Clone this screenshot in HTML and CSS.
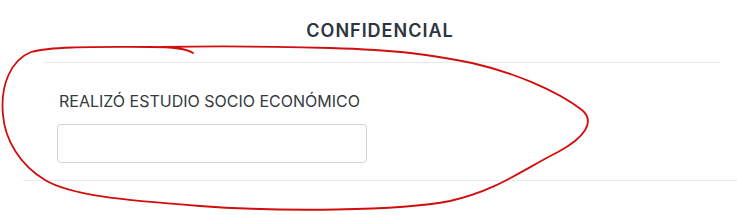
FILE: index.html
```html
<!DOCTYPE html>
<html lang="es">
<head>
    <meta charset="UTF-8">
    <meta name="viewport" content="width=device-width, initial-scale=1.0">
    <title>Confidencial</title>
    <link rel="stylesheet" href="styles.css">
</head>
<body>
    <div class="page">
        <!-- Encabezado de la sección -->
        <div class="section-header">
            <h2 class="section-title">CONFIDENCIAL</h2>
        </div>

        <!-- Campo del formulario -->
        <div class="section-body">
            <label class="field-label" for="estudio">REALIZÓ ESTUDIO SOCIO ECONÓMICO</label>
            <input class="field-input" id="estudio" type="text">
        </div>

        <div class="section-footer"></div>

        <!-- Marca a mano alzada -->
        <svg class="scribble" width="737" height="215" viewBox="0 0 737 215">
            <path d="M193 53 C186 48 172 47 150 47 C100 47 52 46 31 52 C11 60 0 85 3 115 C5 140 20 165 45 180 C70 195 120 200 200 206 C280 212 400 211 450 201 C498 190 522 170 558 152 C584 138 596 122 582 110 C556 90 512 72 472 63 C432 55 400 50 330 48 C262 46 205 46 162 47"
                  fill="none" stroke="#d10d0d" stroke-width="1.8" stroke-linecap="round" stroke-linejoin="round"/>
        </svg>
    </div>
</body>
</html>
```

FILE: styles.css
```css
/* Base */
html, body {
    margin: 0;
    padding: 0;
    background: #ffffff;
    font-family: Inter, "Noto Sans", sans-serif;
    color: #343a40;
}

.page {
    position: relative;
    width: 737px;
    height: 215px;
    overflow: hidden;
}

/* Encabezado */
.section-header {
    height: 63px;
    margin: 0 17px 0 43px;
    border-bottom: 1px solid #e9ecef;
    display: flex;
    justify-content: center;
    align-items: center;
    box-sizing: border-box;
}

.section-title {
    margin: 0 0 2px -3px;
    font-size: 18px;
    font-weight: 600;
    letter-spacing: 1px;
    color: #2c3440;
}

/* Cuerpo */
.section-body {
    padding: 28px 0 17px 57px;
    display: flex;
    flex-direction: column;
    align-items: flex-start;
}

.field-label {
    margin: 0 0 13px 2px;
    font-size: 16px;
    line-height: 20px;
    color: #343a40;
}

.field-input {
    width: 310px;
    height: 39px;
    box-sizing: border-box;
    border: 1px solid #ced4da;
    border-radius: 4px;
    padding: 6px 12px;
    font: inherit;
    background: #fff;
}

.section-footer {
    margin-left: 23px;
    border-top: 1px solid #e9ecef;
}

/* Trazo rojo encima del contenido */
.scribble {
    position: absolute;
    top: 0;
    left: 0;
    pointer-events: none;
}
```
